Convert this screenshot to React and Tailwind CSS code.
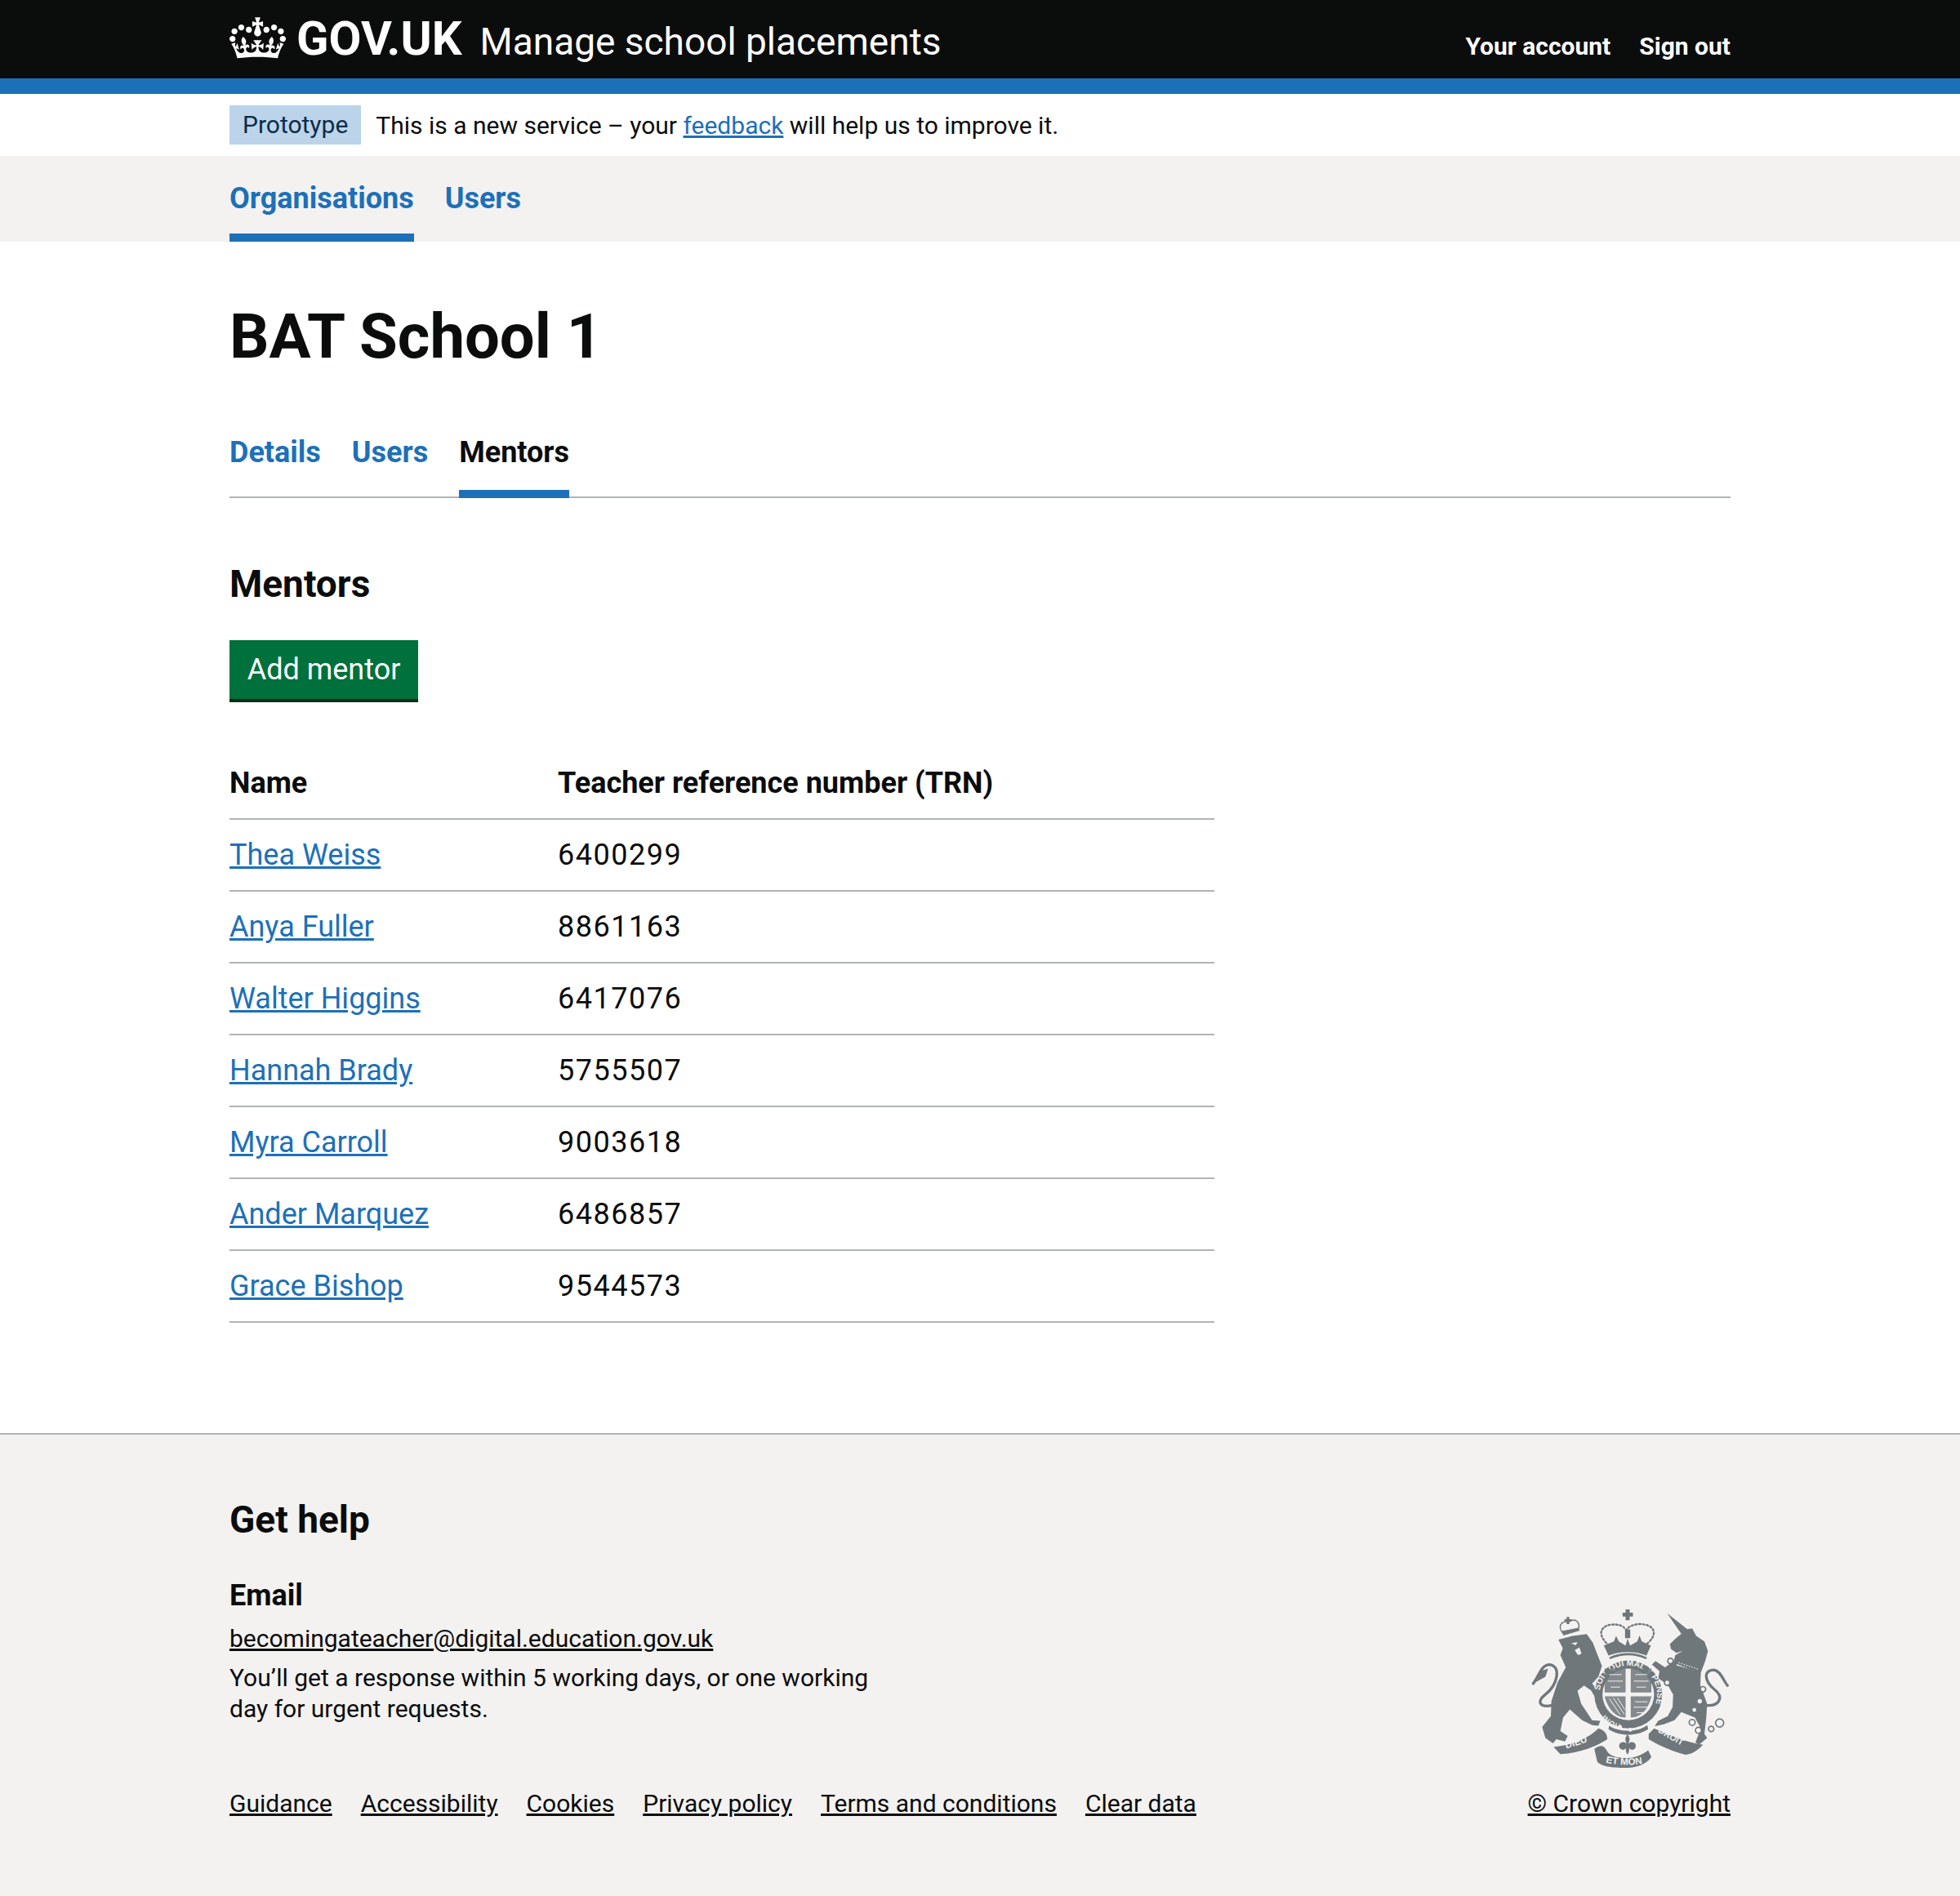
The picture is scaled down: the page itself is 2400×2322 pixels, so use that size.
const mentors = [
  ['Thea Weiss', '6400299'],
  ['Anya Fuller', '8861163'],
  ['Walter Higgins', '6417076'],
  ['Hannah Brady', '5755507'],
  ['Myra Carroll', '9003618'],
  ['Ander Marquez', '6486857'],
  ['Grace Bishop', '9544573'],
];

const footerLinks = ['Guidance', 'Accessibility', 'Cookies', 'Privacy policy', 'Terms and conditions', 'Clear data'];

function Crown() {
  return (
    <svg viewBox="0 0 132 97" className="w-[69px] h-[51px] fill-white shrink-0">
      <path d="M25 30.2c3.5 1.5 7.7-.2 9.1-3.7 1.5-3.6-.2-7.8-3.9-9.2-3.6-1.4-7.6.3-9.1 3.9-1.4 3.5.3 7.5 3.9 9zM9 39.5c3.6 1.5 7.8-.2 9.2-3.7 1.5-3.6-.2-7.8-3.9-9.1-3.6-1.5-7.6.2-9.1 3.8-1.4 3.5.3 7.5 3.8 9zM4.4 57.2c3.5 1.5 7.7-.2 9.1-3.8 1.5-3.6-.2-7.7-3.9-9.1-3.5-1.5-7.6.3-9.1 3.8-1.4 3.5.3 7.6 3.9 9.1zm38.3-21.4c3.5 1.5 7.7-.2 9.1-3.8 1.5-3.6-.2-7.7-3.9-9.1-3.6-1.5-7.6.3-9.1 3.8-1.3 3.6.4 7.7 3.9 9.1zm64.4-5.6c-3.6 1.5-7.8-.2-9.1-3.7-1.5-3.6.2-7.8 3.8-9.2 3.6-1.4 7.7.3 9.2 3.9 1.3 3.5-.4 7.5-3.9 9zm15.9 9.3c-3.6 1.5-7.7-.2-9.1-3.7-1.5-3.6.2-7.8 3.7-9.1 3.6-1.5 7.7.2 9.2 3.8 1.5 3.5-.3 7.5-3.8 9zm4.7 17.7c-3.6 1.5-7.8-.2-9.2-3.8-1.5-3.6.2-7.7 3.9-9.1 3.6-1.5 7.7.3 9.2 3.8 1.3 3.5-.4 7.6-3.9 9.1zM89.3 35.8c-3.6 1.5-7.8-.2-9.2-3.8-1.4-3.6.2-7.7 3.9-9.1 3.6-1.5 7.7.3 9.2 3.8 1.4 3.6-.3 7.7-3.9 9.1zM69.7 17.7l8.9 4.7V9.3l-8.9 2.8c-.2-.3-.5-.6-.9-.9L72.4 0H59.6l3.5 11.2c-.3.3-.6.5-.9.9l-8.8-2.8v13.1l8.8-4.7c.3.3.6.7.9.9l-5 15.4v.1c-.2.8-.4 1.6-.4 2.4 0 4.1 3.1 7.5 7 8.1h.2c.3 0 .7.1 1 .1.4 0 .7 0 1-.1h.2c4-.6 7.1-4.1 7.1-8.1 0-.8-.1-1.7-.4-2.4V34l-5.1-15.4c.4-.2.7-.6 1-.9zM66 92.8c16.9 0 32.8 1.1 47.1 3.2 4-16.9 8.9-26.7 14-33.5l-9.6-3.4c1 4.9 1.1 7.2 0 10.2-1.5-1.4-3-4.3-4.2-8.7L108.6 76c2.8-2 5-3.2 7.5-3.3-4.4 9.4-10 11.9-13.6 11.2-4.3-.8-6.3-4.6-5.6-7.9 1-4.7 5.7-5.9 8-.5 4.3-8.7-3-11.4-7.6-8.8 7.1-7.2 7.9-13.5 2.1-21.1-8 6.1-8.1 12.3-4.5 20.8-4.7-5.4-12.1-2.5-9.5 6.2 3.4-5.2 7.9-2 7.2 3.1-.6 4.3-6.4 7.8-13.5 7.2-10.3-.9-10.9-8-11.2-13.8 2.5-.5 7.1 1.8 11 7.3L80.2 60c-4.1 4.4-8 5.3-12.3 5.4 1.4-4.4 8-11.6 8-11.6H55.5s6.4 7.2 7.9 11.6c-4.2-.1-8-1-12.3-5.4l1.4 16.4c3.9-5.5 8.5-7.7 10.9-7.3-.3 5.8-.9 12.8-11.1 13.8-7.2.6-12.9-2.9-13.5-7.2-.7-5 3.8-8.3 7.1-3.1 2.7-8.7-4.6-11.6-9.4-6.2 3.7-8.5 3.6-14.7-4.6-20.8-5.8 7.6-5 13.9 2.2 21.1-4.7-2.6-11.9.1-7.7 8.8 2.3-5.5 7.1-4.2 8.1.5.7 3.3-1.3 7.1-5.7 7.9-3.5.7-9-1.8-13.5-11.2 2.5.1 4.7 1.3 7.5 3.3l-4.7-15.4c-1.2 4.4-2.7 7.2-4.3 8.7-1.1-3-.9-5.3 0-10.2l-9.5 3.4c5 6.9 9.9 16.7 14 33.5 14.8-2.1 30.8-3.2 47.7-3.2z" />
    </svg>
  );
}

// royal arms, drawn in the crop's 900x840 space
function Crest() {
  const grey = '#6f777b';
  const bg = '#f3f2f1';
  return (
    <svg viewBox="90 60 740 610" className="w-[247px] h-[203px] shrink-0" fontFamily="Liberation Sans, sans-serif" fontWeight="700">
      {/* lion */}
      <path fill={grey} d="M198 183 L250 170 L302 163 L325 195 L338 230 L358 280 L345 320 L322 345 L365 400 L345 415 L318 370 L292 352 L268 372 L282 420 L322 480 L352 482 L345 500 L322 498 L285 480 L240 440 L215 470 L205 520 L232 538 L222 558 L190 550 L178 565 L150 545 L138 505 L170 465 L172 410 L195 340 L225 285 L205 240 L214 215 Z" />
      <path fill={bg} d="M245 197 L268 192 L262 204 Z M258 222 L275 212 L283 235 L270 240 Z" />
      <path fill="none" stroke={grey} strokeWidth="10" strokeLinecap="round" d="M175 425 C135 435 112 415 150 385 C195 350 210 280 165 275 C135 275 125 320 105 345" />
      <path fill={grey} d="M105 345 L130 300 L160 290 L150 320 Z" />
      {/* lion crown */}
      <path fill="none" stroke={grey} strokeWidth="5" strokeDasharray="5 5" strokeLinecap="round" d="M215 160 C190 130 215 112 236 118 C258 100 285 120 268 152" />
      <path fill={grey} d="M210 152 L272 140 L276 150 L216 168 Z M228 100 H238 V108 H246 V116 H238 V126 H228 V116 H220 V108 H228 Z" />
      {/* unicorn */}
      <path fill={grey} d="M598 86 L672 145 L690 142 L705 170 L735 190 L748 225 L738 262 L722 305 L720 350 L745 420 L742 470 L735 530 L745 545 L715 570 L702 562 L722 510 L700 470 L650 450 L625 480 L585 495 L552 502 L565 482 L600 465 L618 432 L620 385 L600 350 L565 325 L570 300 L542 275 L555 262 L590 285 L622 262 L628 240 L655 225 L632 232 L612 218 L608 200 L628 180 L650 162 Z" />
      <path fill={bg} d="M636 262 L715 285 L712 300 L632 278 Z" />
      <path fill={grey} d="M636 250 L648 240 L662 252 L678 250 L698 262 L722 270 L714 305 L630 272 Z" />
      <path fill="none" stroke={bg} strokeWidth="4" strokeDasharray="4 6" d="M640 268 L712 292" />
      <path fill="none" stroke={grey} strokeWidth="10" strokeLinecap="round" d="M738 425 C790 430 810 395 770 365 C735 335 730 295 770 295 C795 298 805 335 820 352" />
      <g fill={bg} stroke={grey} strokeWidth="5">
        <circle cx="610" cy="262" r="10" /><circle cx="598" cy="342" r="10" /><circle cx="730" cy="366" r="10" /><circle cx="690" cy="488" r="11" /><circle cx="713" cy="517" r="11" /><circle cx="760" cy="512" r="10" /><circle cx="791" cy="490" r="15" />
      </g>
      <g fill={bg}><circle cx="718" cy="410" r="8" /><circle cx="698" cy="442" r="7" /></g>
      {/* royal crown */}
      <path fill={grey} d="M445 72 H460 V84 H472 V98 H460 V112 H445 V98 H434 V84 H445 Z M443 146 H462 V178 H443 Z" />
      <path fill="none" stroke={grey} strokeWidth="7" strokeDasharray="6 8" strokeLinecap="round" d="M385 205 C335 165 355 130 395 128 C420 125 440 135 447 148 C460 130 490 122 515 128 C555 135 565 170 515 205" />
      <path fill={grey} d="M365 205 L402 190 L410 170 L420 190 L445 205 L452 180 L462 205 L488 190 L496 168 L505 190 L538 205 L522 242 C480 225 425 225 382 242 Z" />
      <path fill="none" stroke={grey} strokeWidth="8" d="M386 252 C430 232 480 232 522 252" />
      {/* garter */}
      <circle cx="455" cy="385" r="125" fill={grey} />
      <circle cx="455" cy="385" r="95" fill={bg} />
      <defs>
        <path id="garterTop" d="M349 385 A106 106 0 0 1 561 385 A106 106 0 0 1 455 491 A106 106 0 0 1 349 385" />
        <path id="garterLeft" d="M455 500 A118 118 0 0 1 340 385" />
        <path id="ribbonLeft" d="M205 590 C260 575 310 560 352 538" />
        <path id="ribbonMid" d="M362 632 C410 648 490 648 538 632" />
        <path id="ribbonRight" d="M556 518 C600 545 640 570 690 592" />
      </defs>
      <text fontSize="31" fill={bg}>
        <textPath href="#garterTop" startOffset="15">SOIT QUI MAL Y PENSE</textPath>
      </text>
      <text fontSize="28" fill={bg}>
        <textPath href="#garterLeft" startOffset="28">HONI</textPath>
      </text>
      {/* shield */}
      <path fill={grey} d="M368 290 H445 V378 H368 Z M464 290 H540 V378 H464 Z M368 392 H445 V470 C410 470 380 440 368 392 Z M464 392 H540 C530 440 500 470 464 470 Z" opacity="0.85" />
      <g fill="none" stroke={bg} strokeWidth="3">
        <path d="M385 312 H430 M380 336 H435 M390 358 H425 M480 312 H525 M475 336 H530 M485 358 H520 M480 412 H525 M475 432 H530 M485 452 H515" />
        <path d="M385 400 L425 460 M400 398 L440 458 M415 398 L442 440" />
      </g>
      <path fill={grey} d="M385 500 C420 525 490 525 525 498 L528 512 C490 540 420 540 382 512 Z" />
      <circle cx="425" cy="505" r="7" fill={bg} /><circle cx="462" cy="515" r="7" fill={bg} />
      {/* fleur-de-lis */}
      <path fill={grey} d="M452 532 C442 545 442 555 450 566 C432 552 418 565 422 580 C430 592 442 590 445 582 C446 595 448 602 452 606 C456 602 458 595 459 582 C462 590 476 592 482 580 C486 565 472 552 454 566 C462 555 462 545 452 532 Z" />
      {/* motto ribbons */}
      <path fill={grey} d="M180 578 C250 572 310 545 345 510 C365 515 378 530 378 550 C340 575 280 600 205 605 Z" />
      <path fill={grey} d="M330 585 C350 570 365 570 375 590 C385 610 400 610 410 615 C460 625 495 615 528 590 L540 615 C520 645 480 655 440 655 C400 655 350 650 340 630 Z" />
      <path fill={grey} d="M530 530 L550 510 C600 530 660 560 730 570 C710 590 690 605 665 607 C620 595 570 575 530 550 Z" />
      <text fontSize="35" fill={bg}><textPath href="#ribbonLeft" startOffset="22">DIEU</textPath></text>
      <text fontSize="35" fill={bg}><textPath href="#ribbonMid" startOffset="10">ET MON</textPath></text>
      <text fontSize="33" fill={bg}><textPath href="#ribbonRight" startOffset="8">DROIT</textPath></text>
    </svg>
  );
}

export default function App() {
  return (
    <div className="min-h-[2322px] flex flex-col bg-white text-[#0b0c0c] font-['Roboto',sans-serif] text-[36px]">
      {/* Header */}
      <header className="bg-[#0b0c0c] text-white h-[115px] border-b-[19px] border-[#1d70b8] px-[281px] flex items-start justify-between">
        <div className="flex items-start">
          <div className="pt-[21px]"><Crown /></div>
          <span className="ml-[13px] mt-[18px] text-[58px] leading-[58px] font-bold">GOV.UK</span>
          <span className="ml-[22px] mt-[20px] text-[46px] leading-[62px]">Manage school placements</span>
        </div>
        <nav className="flex gap-[35px] pt-[38px] text-[30px] leading-[38px] font-bold">
          <a>Your account</a>
          <a>Sign out</a>
        </nav>
      </header>

      {/* Phase banner */}
      <div className="h-[76px] px-[281px] flex items-center gap-[18px] text-[30px]">
        <strong className="h-[48px] px-[16px] bg-[#bbd4ea] text-[#0c2d4a] font-normal leading-[48px]">Prototype</strong>
        <p>This is a new service – your <a className="text-[#1d70b8] underline">feedback</a> will help us to improve it.</p>
      </div>

      {/* Primary nav */}
      <nav className="bg-[#f3f2f1] h-[105px] px-[281px] flex gap-[38px] text-[36px] font-bold text-[#1d70b8]">
        <a className="h-full pt-[28px] leading-[48px] border-b-[10px] border-[#1d70b8]">Organisations</a>
        <a className="h-full pt-[28px] leading-[48px]">Users</a>
      </nav>

      <main className="px-[281px] flex-1">
        <h1 className="mt-[68px] text-[76px] leading-[96px] font-bold">BAT School 1</h1>

        {/* Tabs */}
        <div className="mt-[70px] flex gap-[38px] border-b-2 border-[#b1b4b6] text-[36px] font-bold leading-[48px]">
          <a className="pb-[30px] text-[#1d70b8]">Details</a>
          <a className="pb-[30px] text-[#1d70b8]">Users</a>
          <a className="pb-[20px] -mb-[2px] border-b-[10px] border-[#1d70b8]">Mentors</a>
        </div>

        <h2 className="mt-[77px] text-[46px] leading-[56px] font-bold">Mentors</h2>

        <button className="block mt-[41px] h-[76px] w-[231px] bg-[#00703c] border-b-4 border-[#002d18] text-white text-[36px] leading-[48px]">Add mentor</button>

        <table className="mt-[55px] w-[1206px] border-collapse">
          <thead>
            <tr className="h-[88px] border-b-2 border-[#b1b4b6] font-bold text-left">
              <th className="w-[402px] font-bold">Name</th>
              <th className="font-bold">Teacher reference number (TRN)</th>
            </tr>
          </thead>
          <tbody>
            {mentors.map(([name, trn]) => (
              <tr key={trn} className="h-[88px] border-b-2 border-[#b1b4b6]">
                <td><a className="text-[#1d70b8] underline">{name}</a></td>
                <td className="tracking-[1.5px]">{trn}</td>
              </tr>
            ))}
          </tbody>
        </table>
      </main>

      {/* Footer */}
      <footer className="h-[567px] bg-[#f3f2f1] border-t-2 border-[#b1b4b6] px-[281px] text-[30px] leading-[38px]">
        <h2 className="mt-[76px] text-[46px] leading-[56px] font-bold">Get help</h2>
        <div className="flex justify-between items-end">
          <div>
            <h3 className="mt-[41px] text-[36px] leading-[48px] font-bold">Email</h3>
            <a className="block mt-[10px] underline">becomingateacher@digital.education.gov.uk</a>
            <p className="mt-[10px] w-[800px]">You’ll get a response within 5 working days, or one working day for urgent requests.</p>
            <div className="mt-[78px] flex gap-[35px]">
              {footerLinks.map((l) => <a key={l} className="underline">{l}</a>)}
            </div>
          </div>
          <div className="flex flex-col items-end gap-[20px]">
            <Crest />
            <a className="underline">© Crown copyright</a>
          </div>
        </div>
      </footer>
    </div>
  );
}
